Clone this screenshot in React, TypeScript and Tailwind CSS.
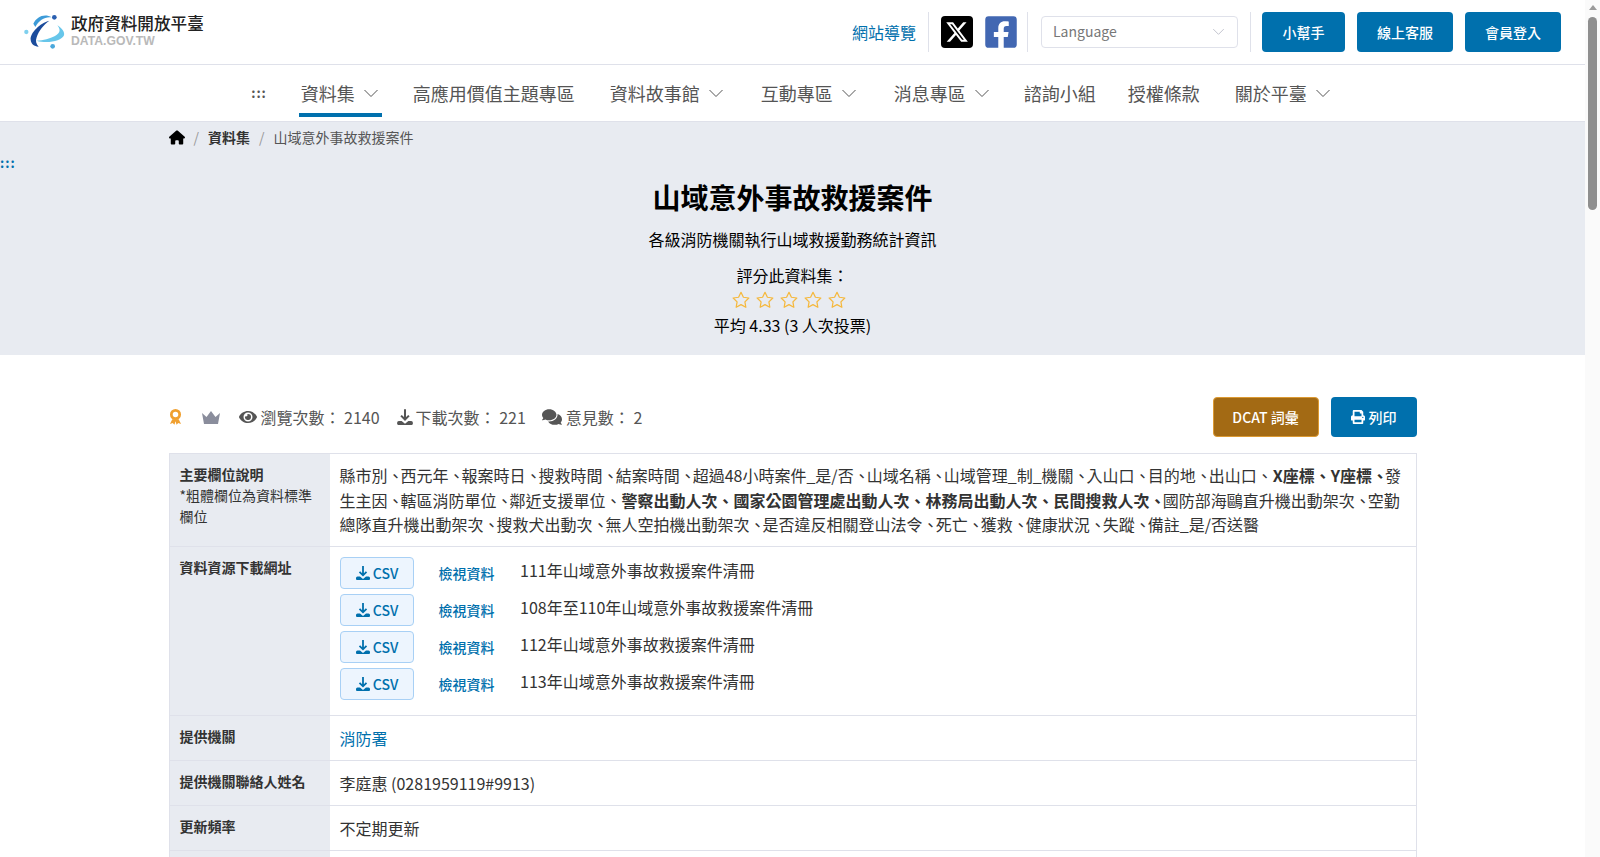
import React from 'react';
import { FaEye, FaComments, FaPrint, FaFacebookSquare } from 'react-icons/fa';
import { FaHouse } from 'react-icons/fa6';

const FONT = { fontFamily: '"Noto Sans CJK TC", "Noto Sans", sans-serif' };

const NAV = [
  { label: '資料集', caret: true, active: true, cls: '' },
  { label: '高應用價值主題專區', cls: '' },
  { label: '資料故事館', caret: true, cls: 'ml-[1px]' },
  { label: '互動專區', caret: true, cls: 'ml-[3px]' },
  { label: '消息專區', caret: true, cls: 'ml-[3px]' },
  { label: '諮詢小組', cls: '' },
  { label: '授權條款', cls: '-ml-[2px]' },
  { label: '關於平臺', caret: true, cls: 'ml-[1px]' },
];

const FILES = [
  '111年山域意外事故救援案件清冊',
  '108年至110年山域意外事故救援案件清冊',
  '112年山域意外事故救援案件清冊',
  '113年山域意外事故救援案件清冊',
];

function Logo() {
  return (
    <svg viewBox="0 0 150 144" className="w-[50px] h-[48px]">
      <path d="M50 98C80 108 125 100 132 82 135 72 125 60 112 52 122 65 122 75 105 84 90 92 70 97 50 98z" fill="#67c6ea" />
      <path d="M40 47C50 25 75 15 95 28 75 25 58 35 46 57z" fill="#3d9bd8" />
      <path d="M88 38C60 45 30 75 32 95 33 108 42 114 56 116 48 108 46 98 50 88 56 68 72 50 88 38z" fill="#1b4c9c" />
      <circle cx="103" cy="28" r="7" fill="#2a5fb0" />
      <circle cx="19" cy="72" r="6.5" fill="#7fd0ee" />
      <circle cx="98" cy="115" r="7" fill="#4aa8dc" />
    </svg>
  );
}

function XIcon() {
  return (
    <div className="w-[32px] h-[32px] rounded-[4px] bg-black flex items-center justify-center">
      <svg viewBox="0 0 24 24" className="w-[24px] h-[24px]" fill="#fff">
        <path d="M18.244 2.25h3.308l-7.227 8.26 8.502 11.24H16.17l-5.214-6.817L4.99 21.75H1.68l7.73-8.835L1.254 2.25H8.08l4.713 6.231 5.45-6.231zm-1.161 17.52h1.833L7.084 4.126H5.117l11.966 15.644z" />
      </svg>
    </div>
  );
}

function Caret({ className }: { className?: string }) {
  return (
    <svg viewBox="0 0 16 16" className={className} fill="none" stroke="currentColor" strokeWidth="1">
      <path d="M1.5 5L8 11.5 14.5 5" />
    </svg>
  );
}

function DownloadIcon({ className }: { className?: string }) {
  return (
    <svg viewBox="0 0 16 16" className={className} fill="currentColor">
      <path d="M8 1v9M4.5 6.8L8 10.3l3.5-3.5" fill="none" stroke="currentColor" strokeWidth="1.8" />
      <path d="M1 13a1.5 1.5 0 0 1 1.5-1.5H5L8 14l3-2.5h2.5A1.5 1.5 0 0 1 15 13v1a1 1 0 0 1-1 1H2a1 1 0 0 1-1-1z" />
    </svg>
  );
}

function Sep() {
  return <div className="w-px h-[40px] bg-[#dfe1ea]" />;
}

function DarkButton({ children, className }: { children: React.ReactNode; className: string }) {
  return (
    <button type="button" className={`h-[40px] rounded-[4px] bg-[#0070ad] text-white text-[14px] font-medium flex items-center justify-center ${className}`}>
      {children}
    </button>
  );
}

// the reference sets the 、 between fields narrower than a full em; the one right before a bold run stays full width
function Fields({ text }: { text: string }) {
  const parts = text.split('、');
  return (
    <>
      {parts.map((p, i) => (
        <React.Fragment key={i}>
          {p}
          {i < parts.length - 2 && <span className="tracking-[-3px]">、</span>}
          {i === parts.length - 2 && (parts[i + 1] ? <span className="tracking-[-3px]">、</span> : '、')}
        </React.Fragment>
      ))}
    </>
  );
}

function Row({ head, sub, children }: { head?: string; sub?: string; children?: React.ReactNode }) {
  return (
    <div className="flex border-b border-[#dfe1ea]">
      <div className="w-[160px] shrink-0 bg-[#e8ebf1] p-[10px] text-[14px] leading-[21px] text-[#333]">
        <div className="font-bold">{head}</div>
        {sub && <div>{sub}</div>}
      </div>
      <div className="flex-1 min-h-[44px] p-[10px] text-[16px] leading-[24px] text-[#333]">{children}</div>
    </div>
  );
}

export default function App() {
  return (
    <div className="h-screen flex overflow-hidden bg-white" style={FONT}>
      <div className="flex-1 min-w-0 overflow-hidden">
        {/* Top bar */}
        <header className="h-[65px] flex items-center justify-between border-b border-[#dfe1ea] pl-[20px] pr-[24px]">
          <div className="flex items-center gap-[1px]">
            <Logo />
            <div className="-mt-[3px]">
              <div className="text-[16.6px] leading-[20px] font-medium text-[#222]">政府資料開放平臺</div>
              <div className="mt-[1px] text-[12.2px] leading-[14px] font-bold text-[#b9b9b9]" style={{ fontFamily: '"Liberation Sans", sans-serif' }}>DATA.GOV.TW</div>
            </div>
          </div>
          <div className="flex items-center">
            <a className="text-[16px] text-[#0070ad]">網站導覽</a>
            <div className="mx-[12px]"><Sep /></div>
            <XIcon />
            <FaFacebookSquare className="ml-[10px] w-[36px] h-[36px] text-[#4267b2]" />
            <div className="ml-[8px] mr-[13px]"><Sep /></div>
            <div className="w-[197px] h-[32px] border border-[#dfe1ea] rounded-[4px] flex items-center justify-between pl-[11px] pr-[12px] pb-[1px] text-[14px] text-[#777]">
              Language
              <Caret className="w-[13px] h-[13px] text-[#b5b8c4]" />
            </div>
            <div className="ml-[12px] mr-[11px]"><Sep /></div>
            <DarkButton className="w-[83px]">小幫手</DarkButton>
            <DarkButton className="w-[96px] ml-[12px]">線上客服</DarkButton>
            <DarkButton className="w-[96px] ml-[12px]">會員登入</DarkButton>
          </div>
        </header>

        {/* Main nav */}
        <nav className="h-[57px] pl-[14px] flex items-center justify-center border-b border-[#dfe1ea] text-[18px] text-[#555]">
          <span className="mr-[17px] text-[13px] font-bold tracking-[1px]">:::</span>
          {NAV.map((n) => (
            <div key={n.label} className={`relative h-full flex items-center gap-[8px] px-[17px] ${n.cls}`}>
              {n.label}
              {n.caret && <Caret className="w-[16px] h-[16px]" />}
              {n.active && <div className="absolute left-[15px] right-[14px] bottom-[4px] h-[4px] bg-[#0070ad]" />}
            </div>
          ))}
        </nav>

        {/* Title band */}
        <section className="relative h-[233px] bg-[#e8ebf1]">
          <div className="w-[1248px] mx-auto flex items-center h-[31px] text-[14px] text-[#555]">
            <FaHouse className="w-[16px] h-[15px] text-black" />
            <span className="mx-[9px] text-[#999]">/</span>
            <span className="font-bold text-[#333]">資料集</span>
            <span className="mx-[9px] text-[#999]">/</span>
            <span>山域意外事故救援案件</span>
          </div>
          <span className="absolute left-0 top-[31px] text-[13px] font-bold leading-[20px] tracking-[1px] text-[#0070ad]">:::</span>
          <div className="flex flex-col items-center text-black">
            <h1 className="mt-[24px] text-[28px] leading-[40px] font-bold">山域意外事故救援案件</h1>
            <p className="mt-[10px] text-[16px] leading-[24px]">各級消防機關執行山域救援勤務統計資訊</p>
            <p className="mt-[12px] text-[16px] leading-[24px]">評分此資料集：</p>
            <div className="flex gap-[4px] mt-[3px] pr-[8px]">
              {[0, 1, 2, 3, 4].map((i) => (
                <svg key={i} viewBox="0 0 24 24" className="w-[20px] h-[20px]" fill="none" stroke="#f5b83d" strokeWidth="1.5" strokeLinejoin="round">
                  <path d="M12 2.8l2.9 5.9 6.5.9-4.7 4.6 1.1 6.5-5.8-3.1-5.8 3.1 1.1-6.5-4.7-4.6 6.5-.9z" />
                </svg>
              ))}
            </div>
            <p className="mt-[3px] text-[16px] leading-[24px]">平均 4.33 (3 人次投票)</p>
          </div>
        </section>

        {/* Body */}
        <main className="w-[1248px] mx-auto">
          <div className="mt-[42px] h-[40px] flex items-center justify-between">
            <div className="flex items-center text-[16px] text-[#555]">
              <svg viewBox="0 0 12 15" className="w-[13px] h-[16px]" fill="#f0a030">
                <circle cx="6" cy="5.2" r="3.9" fill="none" stroke="#f0a030" strokeWidth="2.6" />
                <path d="M3 9.5L.8 14l2.6-.8L5 14.8l1-3.3 1 3.3 1.6-1.6 2.6.8L9 9.5z" />
              </svg>
              <svg viewBox="0 0 18 13" className="ml-[20px] w-[18px] h-[13px]" fill="#8a8d9c">
                <path d="M0 2l4.5 4L9 0l4.5 6L18 2l-2 11H2z" />
              </svg>
              <FaEye className="ml-[19px] w-[18px] h-[18px]" />
              <span className="ml-[4px]">瀏覽次數： 2140</span>
              <DownloadIcon className="ml-[16px] w-[18px] h-[18px]" />
              <span className="ml-[2px]">下載次數： 221</span>
              <FaComments className="ml-[16px] w-[20px] h-[18px]" />
              <span className="ml-[4px]">意見數： 2</span>
            </div>
            <div className="flex items-center gap-[12px]">
              <button type="button" className="h-[40px] w-[106px] rounded-[4px] bg-[#a36a14] border border-[#dc9a33] text-white text-[14px] font-medium">DCAT 詞彙</button>
              <button type="button" className="h-[40px] w-[86px] rounded-[4px] bg-[#0070ad] text-white text-[14px] font-medium flex items-center justify-center gap-[4px]">
                <FaPrint className="w-[14px] h-[14px]" />列印
              </button>
            </div>
          </div>

          <div className="mt-[16px] border border-b-0 border-[#dfe1ea]">
            <Row head="主要欄位說明" sub="*粗體欄位為資料標準欄位">
              <div className="-mt-[1px] h-[73px] leading-[24.5px]">
                <Fields text="縣市別、西元年、報案時日、搜救時間、結案時間、超過48小時案件_是/否、山域名稱、山域管理_制_機關、入山口、目的地、出山口、" />
                <b>X座標、Y座標<span className="tracking-[-3px]">、</span></b>
                <Fields text="發生主因、轄區消防單位、鄰近支援單位、" />
                <b>警察出動人次、國家公園管理處出動人次、林務局出動人次、民間搜救人次<span className="tracking-[-3px]">、</span></b>
                <Fields text="國防部海鷗直升機出動架次、空勤總隊直升機出動架次、搜救犬出動次、無人空拍機出動架次、是否違反相關登山法令、死亡、獲救、健康狀況、失蹤、備註_是/否送醫" />
              </div>
            </Row>
            <Row head="資料資源下載網址">
              <div className="flex flex-col gap-[5px] pb-[5px]">
                {FILES.map((f) => (
                  <div key={f} className="flex h-[32px]">
                    <button type="button" className="w-[74px] h-[32px] rounded-[4px] border border-[#a8d0f5] bg-[#edf5fe] text-[#0070ad] text-[14px] font-medium flex items-center justify-center gap-[2px]">
                      <DownloadIcon className="w-[16px] h-[16px]" />CSV
                    </button>
                    <a className="ml-[25px] text-[14px] font-medium leading-[32px] text-[#0070ad]">檢視資料</a>
                    <span className="ml-[25.5px] leading-[26px]">{f}</span>
                  </div>
                ))}
              </div>
            </Row>
            <Row head="提供機關"><a className="text-[#0070ad]">消防署</a></Row>
            <Row head="提供機關聯絡人姓名">李庭惠 (0281959119#9913)</Row>
            <Row head="更新頻率">不定期更新</Row>
            <Row />
          </div>
        </main>
      </div>

      {/* Browser scrollbar */}
      <div className="w-[15px] shrink-0 bg-[#fafafa] flex flex-col items-center">
        <div className="h-[15px] flex items-center justify-center">
          <div className="w-0 h-0 border-x-[4.5px] border-x-transparent border-b-[5px] border-b-[#9a9a9a]" />
        </div>
        <div className="w-[9px] h-[193px] mt-[2px] rounded-[5px] bg-[#8f8f8f]" />
      </div>
    </div>
  );
}
